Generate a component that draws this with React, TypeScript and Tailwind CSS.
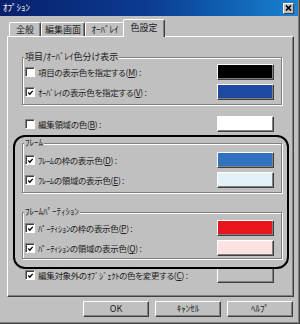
import React from "react";

const font = "font-['Noto_Sans_CJK_JP','Noto_Sans',sans-serif] [font-feature-settings:'palt'_1]";

function Check({ checked }: { checked: boolean }) {
  return (
    <span className="flex h-[10px] w-[10px] shrink-0 items-center justify-center border border-t-[#808080] border-l-[#808080] border-b-white border-r-white bg-white shadow-[inset_1px_1px_0_#404040]">
      {checked && (
        <svg width="8" height="8" viewBox="0 0 8 8" className="ml-[1px] mt-[1px]">
          <path d="M1.5 3.5 L3.2 5.4 L6.5 1.6" fill="none" stroke="#000" strokeWidth="1.5" />
        </svg>
      )}
    </span>
  );
}

function Swatch({ cls }: { cls: string }) {
  return (
    <span
      className={`h-[16px] w-[57px] shrink-0 border border-t-white border-l-white border-r-[#404040] border-b-[#404040] shadow-[inset_-1px_-1px_0_#808080] ${cls}`}
    />
  );
}

function Row({ checked, text, k, swatch }: { checked: boolean; text: string; k: string; swatch: string }) {
  return (
    <div className="flex h-[20px] items-center pl-[2px] pr-[7px]">
      <Check checked={checked} />
      <span className="ml-[3px] flex-1 whitespace-nowrap text-[8.5px] leading-[10px] tracking-[-0.3px] text-[#222]">
        {text}(<span className="underline decoration-1 underline-offset-1">{k}</span>) :
      </span>
      <Swatch cls={swatch} />
    </div>
  );
}

function Group({ title, className, labelGap, children }: { title: string; className: string; labelGap: string; children: React.ReactNode }) {
  return (
    <div className={`ml-[14px] w-[260px] border border-[#808080] shadow-[inset_1px_1px_0_#fff,1px_1px_0_#fff] ${className}`}>
      <div className={`-mt-[6px] ml-[1px] w-fit bg-[#c0c0c0] px-[1px] text-[9px] leading-[10px] text-[#222] ${labelGap}`}>
        {title}
      </div>
      {children}
    </div>
  );
}

function Tab({ label, w }: { label: string; w: string }) {
  return (
    <div
      className={`flex h-[14px] items-center justify-center rounded-t-[2px] border-t border-l border-r border-t-white border-l-white border-r-[#404040] shadow-[inset_-1px_0_0_#808080] text-[9px] leading-[10px] text-[#222] ${w}`}
    >
      {label}
    </div>
  );
}

function Button({ label }: { label: string }) {
  return (
    <div className="flex h-[16px] w-[66px] items-center justify-center border border-t-white border-l-white border-r-[#404040] border-b-[#404040] shadow-[inset_-1px_-1px_0_#808080] text-[9px] leading-[10px] text-[#222]">
      {label}
    </div>
  );
}

export default function App() {
  return (
    <div className={`flex h-[324px] w-[300px] flex-col bg-[#c0c0c0] shadow-[inset_-1px_-1px_0_#404040,inset_-2px_-2px_0_#808080] ${font}`}>
      {/* title bar */}
      <div className="flex h-[16px] w-[298px] items-center justify-between bg-gradient-to-r from-[#08206c] via-[#0c3c92] to-[#1a82d0] pl-[3px] pr-[4px]">
        <span className="text-[9px] leading-[10px] text-white">ｵﾌﾟｼｮﾝ</span>
        <span className="flex h-[11px] w-[11px] items-center justify-center border border-t-white border-l-white border-r-[#404040] border-b-[#404040] bg-[#c0c0c0]">
          <svg width="7" height="6" viewBox="0 0 7 6">
            <path d="M1 0.5 L6 5.5 M6 0.5 L1 5.5" stroke="#000" strokeWidth="1.6" />
          </svg>
        </span>
      </div>

      {/* tabs */}
      <div className="mt-[3px] flex h-[17px] items-end pl-[9px]">
        <Tab label="全般" w="w-[32px]" />
        <Tab label="編集画面" w="w-[44px]" />
        <Tab label="ｵｰﾊﾞﾚｲ" w="w-[40px]" />
        <div className="relative z-10 -mb-[1px] -ml-[2px] flex h-[18px] w-[42px] items-center justify-center rounded-t-[2px] border-t border-l border-r border-t-white border-l-white border-r-[#404040] bg-[#c0c0c0] pb-[1px] text-[9px] leading-[10px] text-[#222] shadow-[inset_-1px_0_0_#808080]">
          色設定
        </div>
      </div>

      {/* panel */}
      <div className="relative ml-[7px] h-[261px] w-[287px] border border-t-white border-l-white border-r-[#404040] border-b-[#404040] shadow-[inset_-1px_-1px_0_#808080]">
        <Group title="項目/ｵｰﾊﾞﾚｲ色分け表示" className="mt-[20px] pb-[2px]" labelGap="">
          <Row checked={false} text="項目の表示色を指定する" k="M" swatch="bg-[#000000]" />
          <Row checked={true} text="ｵｰﾊﾞﾚｲの表示色を指定する" k="V" swatch="bg-[#1c4aa2]" />
        </Group>

        <div className="ml-[14px] mt-[9px] w-[260px] px-[1px]">
          <Row checked={false} text="編集領域の色" k="B" swatch="bg-white" />
        </div>

        <Group title="ﾌﾚｰﾑ" className="mt-[9px] pb-[2px]" labelGap="mb-[2px]">
          <Row checked={true} text="ﾌﾚｰﾑの枠の表示色" k="D" swatch="bg-[#2e72c0]" />
          <Row checked={true} text="ﾌﾚｰﾑの領域の表示色" k="E" swatch="bg-[#e2f2f6]" />
        </Group>

        <Group title="ﾌﾚｰﾑﾊﾟｰﾃｨｼｮﾝ" className="mt-[19px]" labelGap="mb-[1px]">
          <Row checked={true} text="ﾊﾟｰﾃｨｼｮﾝの枠の表示色" k="P" swatch="bg-[#e8161c]" />
          <Row checked={true} text="ﾊﾟｰﾃｨｼｮﾝの領域の表示色" k="Q" swatch="bg-[#fde2e2]" />
        </Group>

        <div className="ml-[14px] mt-[6px] w-[260px] px-[1px]">
          <Row checked={true} text="編集対象外のｵﾌﾞｼﾞｪｸﾄの色を変更する" k="C" swatch="bg-[#c0c0c0]" />
        </div>

        {/* annotation outline */}
        <div className="pointer-events-none absolute left-[5px] top-[98px] h-[134px] w-[276px] rounded-[12px] border-2 border-black" />
      </div>

      {/* buttons */}
      <div className="mt-[4px] flex justify-end gap-[6px] pr-[7px]">
        <Button label="OK" />
        <Button label="ｷｬﾝｾﾙ" />
        <Button label="ﾍﾙﾌﾟ" />
      </div>
    </div>
  );
}
